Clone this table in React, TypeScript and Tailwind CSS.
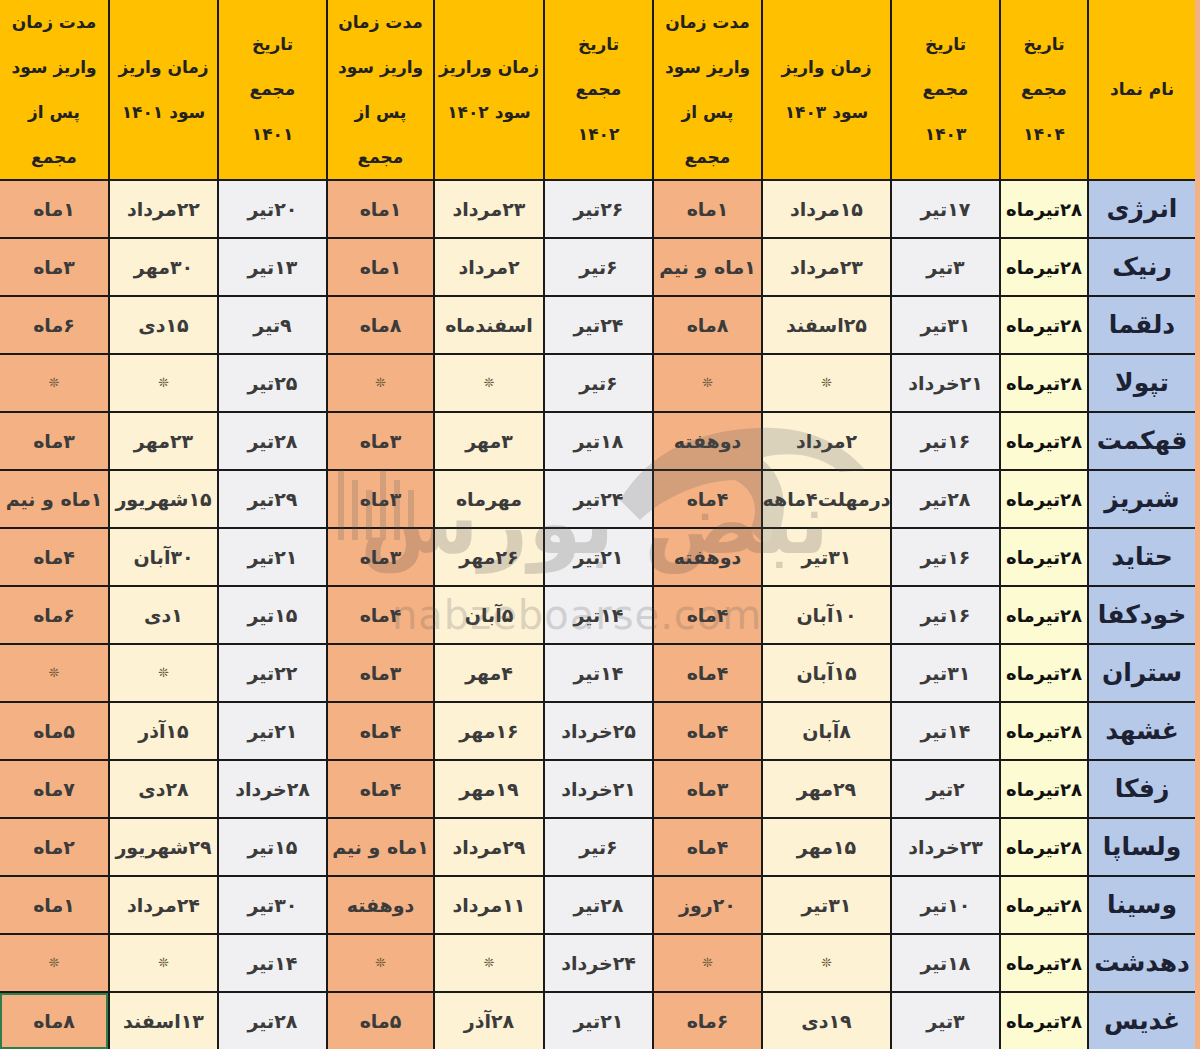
import React from 'react'

const STAR = '❊'

// columns listed right-to-left, as the sheet reads
const cols = [
  { bg: 'bg-[#b7c9e8]', head: ['نام نماد'] },
  { bg: 'bg-[#fdfbd1]', head: ['تاریخ', 'مجمع', '۱۴۰۴'] },
  { bg: 'bg-[#f0f0f2]', head: ['تاریخ', 'مجمع', '۱۴۰۳'] },
  { bg: 'bg-[#fef2d5]', head: ['زمان واریز', 'سود ۱۴۰۳'] },
  { bg: 'bg-[#f4b184]', head: ['مدت زمان', 'واریز سود', 'پس از', 'مجمع'] },
  { bg: 'bg-[#f0f0f2]', head: ['تاریخ', 'مجمع', '۱۴۰۲'] },
  { bg: 'bg-[#fef2d5]', head: ['زمان وراریز', 'سود ۱۴۰۲'] },
  { bg: 'bg-[#f4b184]', head: ['مدت زمان', 'واریز سود', 'پس از', 'مجمع'] },
  { bg: 'bg-[#f0f0f2]', head: ['تاریخ', 'مجمع', '۱۴۰۱'] },
  { bg: 'bg-[#fef2d5]', head: ['زمان واریز', 'سود ۱۴۰۱'] },
  { bg: 'bg-[#f4b184]', head: ['مدت زمان', 'واریز سود', 'پس از', 'مجمع'] },
]

const rows = [
  ['انرژی', '۲۸تیرماه', '۱۷تیر', '۱۵مرداد', '۱ماه', '۲۶تیر', '۲۳مرداد', '۱ماه', '۲۰تیر', '۲۲مرداد', '۱ماه'],
  ['رنیک', '۲۸تیرماه', '۳تیر', '۲۳مرداد', '۱ماه و نیم', '۶تیر', '۲مرداد', '۱ماه', '۱۳تیر', '۳۰مهر', '۳ماه'],
  ['دلقما', '۲۸تیرماه', '۳۱تیر', '۲۵اسفند', '۸ماه', '۲۴تیر', 'اسفندماه', '۸ماه', '۹تیر', '۱۵دی', '۶ماه'],
  ['تپولا', '۲۸تیرماه', '۲۱خرداد', STAR, STAR, '۶تیر', STAR, STAR, '۲۵تیر', STAR, STAR],
  ['قهکمت', '۲۸تیرماه', '۱۶تیر', '۲مرداد', 'دوهفته', '۱۸تیر', '۳مهر', '۳ماه', '۲۸تیر', '۲۳مهر', '۳ماه'],
  ['شبریز', '۲۸تیرماه', '۲۸تیر', 'درمهلت۴ماهه', '۴ماه', '۲۴تیر', 'مهرماه', '۳ماه', '۲۹تیر', '۱۵شهریور', '۱ماه و نیم'],
  ['حتاید', '۲۸تیرماه', '۱۶تیر', '۳۱تیر', 'دوهفته', '۲۱تیر', '۲۶مهر', '۳ماه', '۲۱تیر', '۳۰آبان', '۴ماه'],
  ['خودکفا', '۲۸تیرماه', '۱۶تیر', '۱۰آبان', '۴ماه', '۱۴تیر', '۵آبان', '۴ماه', '۱۵تیر', '۱دی', '۶ماه'],
  ['ستران', '۲۸تیرماه', '۳۱تیر', '۱۵آبان', '۴ماه', '۱۴تیر', '۴مهر', '۳ماه', '۲۲تیر', STAR, STAR],
  ['غشهد', '۲۸تیرماه', '۱۴تیر', '۸آبان', '۴ماه', '۲۵خرداد', '۱۶مهر', '۴ماه', '۲۱تیر', '۱۵آذر', '۵ماه'],
  ['زفکا', '۲۸تیرماه', '۲تیر', '۲۹مهر', '۳ماه', '۲۱خرداد', '۱۹مهر', '۴ماه', '۲۸خرداد', '۲۸دی', '۷ماه'],
  ['ولساپا', '۲۸تیرماه', '۲۳خرداد', '۱۵مهر', '۴ماه', '۶تیر', '۲۹مرداد', '۱ماه و نیم', '۱۵تیر', '۲۹شهریور', '۲ماه'],
  ['وسینا', '۲۸تیرماه', '۱۰تیر', '۳۱تیر', '۲۰روز', '۲۸تیر', '۱۱مرداد', 'دوهفته', '۳۰تیر', '۲۴مرداد', '۱ماه'],
  ['دهدشت', '۲۸تیرماه', '۱۸تیر', STAR, STAR, '۲۴خرداد', STAR, STAR, '۱۴تیر', STAR, STAR],
  ['غدیس', '۲۸تیرماه', '۳تیر', '۱۹دی', '۶ماه', '۲۱تیر', '۲۸آذر', '۵ماه', '۲۸تیر', '۱۳اسفند', '۸ماه'],
]

function Cell({ text, ci, last }) {
  const col = cols[ci]
  const isStar = text === STAR
  let tone = 'text-[19px] font-bold text-[#3b3b3b]'
  if (ci === 0) tone = 'text-[25px] font-bold text-[#1c2233]'
  else if (ci === 1) tone = 'text-[18px] font-bold text-[#111]'
  if (isStar) tone = 'text-[13px] text-[#6b5a3a]'
  const sel = last && ci === 10 ? 'ring-2 ring-inset ring-[#2f7d4a]' : ''
  return (
    <div className={`${col.bg} ${sel} flex items-center justify-center whitespace-nowrap ${tone}`}>
      {text}
    </div>
  )
}

export default function App() {
  return (
    <div className="relative h-[1049px] w-[1200px] overflow-hidden bg-[#f4b184]" style={{ fontFamily: '"DejaVu Sans", sans-serif' }}>
      <div
        dir="rtl"
        className="-ml-[2px] grid w-[1197px] grid-cols-[106px_86px_107px_127px_107px_107px_108px_105px_107px_107px_108px] grid-rows-[179px_repeat(15,56px)] gap-[2px] bg-[#1a1a1a] pb-[2px] pl-[2px]"
      >
        {cols.map((c, i) => (
          <div key={i} className="flex flex-col items-center justify-center bg-[#ffc000] text-[17px] font-bold leading-[45px] text-[#222]">
            {c.head.map((l, j) => (
              <span key={j} className="whitespace-nowrap">{l}</span>
            ))}
          </div>
        ))}
        {rows.map((r, ri) =>
          r.map((t, ci) => <Cell key={ri + '-' + ci} text={t} ci={ci} last={ri === rows.length - 1} />)
        )}
      </div>

      {/* watermark */}
      <div className="pointer-events-none absolute left-[320px] top-[410px] h-[240px] w-[560px] opacity-[0.2]">
        <svg width="560" height="150" viewBox="0 0 560 150" className="absolute left-0 top-0">
          <path d="M300 90 C330 40 380 20 440 18 C480 16 520 30 545 60 L520 62 C500 45 470 40 440 48 C470 70 470 110 450 140 L430 120 C440 100 435 80 415 70 C380 70 340 90 320 110 Z" fill="#555" />
          {[18, 32, 46, 60, 74, 88].map((x, i) => (
            <rect key={i} x={x} y={60 + (i % 3) * 10} width="6" height={70 - (i % 3) * 10} fill="#555" />
          ))}
        </svg>
        <div dir="rtl" className="absolute left-[40px] top-[70px] text-[86px] font-bold leading-none text-[#444]">نبض بورس</div>
        <div className="absolute left-[72px] top-[185px] text-[40px] leading-none tracking-[1px] text-[#555]">nabzeboarse.com</div>
      </div>
    </div>
  )
}
